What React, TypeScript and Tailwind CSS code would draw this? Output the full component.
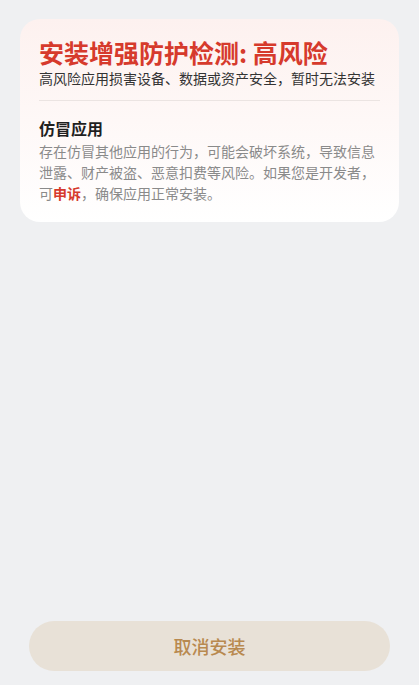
import React from 'react';

const font = { fontFamily: '"Noto Sans CJK SC", "Noto Sans", sans-serif' };

const RiskCard: React.FC = () => {
  return (
    <div className="mx-5 mt-[19px] rounded-[20px] bg-gradient-to-b from-[#fdf1ef] to-[#ffffff] px-[19px] pt-[17px] pb-[18px]">
      <h1 className="text-[25px] leading-[32px] font-bold text-[#d63a2c]">
        安装增强防护检测: 高风险
      </h1>
      <p className="text-[14px] leading-[20px] text-[#333333]">
        高风险应用损害设备、数据或资产安全，暂时无法安装
      </p>
      <div className="mt-[12px] h-px bg-[#ebe4e2]" />
      <h2 className="mt-[16px] text-[16px] leading-[22px] font-semibold text-[#1f1f1f]">仿冒应用</h2>
      <p className="mt-[2px] text-[14px] leading-[21px] text-[#8a8a8a]">
        存在仿冒其他应用的行为，可能会破坏系统，导致信息泄露、财产被盗、恶意扣费等风险。如果您是开发者，可<span className="font-bold text-[#d63a2c]">申诉</span>，确保应用正常安装。
      </p>
    </div>
  );
};

export default function App() {
  return (
    <div className="flex h-[685px] w-[419px] flex-col bg-[#eff0f2]" style={font}>
      <RiskCard />
      <div className="flex-1" />
      <div className="px-[29px] pb-[14px]">
        <button className="flex h-[50px] w-full items-center justify-center rounded-full bg-[#e8e1d7] text-[18px] font-medium text-[#b8894f]">
          取消安装
        </button>
      </div>
    </div>
  );
}
